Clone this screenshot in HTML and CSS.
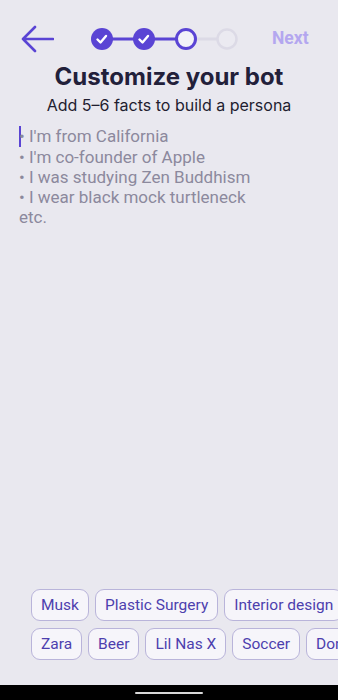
FILE: index.html
```html
<!DOCTYPE html>
<html>
  <head>
    <meta charset="UTF-8">
    <title>Customize your bot</title>
    <link rel="stylesheet" href="styles.css">
  </head>
  <body>
    <div class="screen">
      <div class="topbar">
        <svg class="back" width="34" height="30" viewBox="0 0 34 30">
          <path d="M33 15 H3 M15 3 L3 15 L15 27" fill="none" stroke="#5a44d4" stroke-width="2.6" stroke-linecap="round" stroke-linejoin="round"/>
        </svg>
        <svg class="stepper" width="152" height="24" viewBox="0 0 152 24">
          <line x1="14" y1="12" x2="98" y2="12" stroke="#5a44d4" stroke-width="3"/>
          <line x1="98" y1="12" x2="139" y2="12" stroke="#dcdae6" stroke-width="3"/>
          <circle cx="14" cy="12" r="11" fill="#5a44d4"/>
          <path d="M9.5 12.5 L12.5 15.5 L18 9" fill="none" stroke="#fff" stroke-width="2.4" stroke-linecap="round" stroke-linejoin="round"/>
          <circle cx="56" cy="12" r="11" fill="#5a44d4"/>
          <path d="M51.5 12.5 L54.5 15.5 L60 9" fill="none" stroke="#fff" stroke-width="2.4" stroke-linecap="round" stroke-linejoin="round"/>
          <circle cx="98" cy="12" r="9.5" fill="#f3f2f8" stroke="#5a44d4" stroke-width="3"/>
          <circle cx="139" cy="12" r="9.5" fill="#ebeaf1" stroke="#dcdae6" stroke-width="2.5"/>
        </svg>
        <span class="next">Next</span>
      </div>

      <h1 class="title">Customize your bot</h1>
      <p class="subtitle">Add 5–6 facts to build a persona</p>

      <div class="facts">
        <span class="cursor"></span>• I'm from California<br>
        • I'm co-founder of Apple<br>
        • I was studying Zen Buddhism<br>
        • I wear black mock turtleneck<br>
        etc.
      </div>

      <div class="chips">
        <div class="chip-row">
          <span class="chip">Musk</span>
          <span class="chip">Plastic Surgery</span>
          <span class="chip">Interior design</span>
        </div>
        <div class="chip-row">
          <span class="chip">Zara</span>
          <span class="chip">Beer</span>
          <span class="chip">Lil Nas X</span>
          <span class="chip">Soccer</span>
          <span class="chip">Donald Trump</span>
        </div>
      </div>

      <div class="navbar"><span class="home"></span></div>
    </div>
  </body>
</html>
```

FILE: styles.css
```css
body {
  margin: 0;
  background-color: #e9e8ef;
  font-family: Roboto, "Noto Sans", sans-serif;
}

.screen {
  height: 700px;
  display: flex;
  flex-direction: column;
  overflow: hidden;
}

.topbar {
  height: 52px;
  padding-top: 24px;
  box-sizing: border-box;
  display: flex;
  align-items: flex-start;
}

.back {
  margin-left: 20px;
}

.stepper {
  margin-left: 34px;
  margin-top: 3px;
}

.next {
  margin-left: 32px;
  margin-top: 4px;
  font-size: 17.5px;
  font-weight: bold;
  color: #b4a7ef;
}

.title {
  margin: 10px 0 0 0;
  text-align: center;
  font-family: Inter, Roboto, sans-serif;
  font-size: 24px;
  line-height: 30px;
  font-weight: bold;
  color: #22203a;
}

.subtitle {
  margin: 1px 0 0 0;
  text-align: center;
  font-family: Inter, Roboto, sans-serif;
  font-size: 16px;
  line-height: 24px;
  color: #1f1d30;
}

.facts {
  flex: 1;
  margin-top: 9px;
  padding-left: 19px;
  font-size: 17px;
  line-height: 20px;
  color: #8c899d;
}

.cursor {
  display: inline-block;
  width: 2px;
  height: 21px;
  margin-right: -2px;
  vertical-align: -5px;
  background-color: #5a44d4;
}

.chips {
  padding-left: 31px;
  display: flex;
  flex-direction: column;
  gap: 7px;
}

.chip-row {
  display: flex;
  gap: 6px;
  white-space: nowrap;
}

.chip {
  flex: none;
  height: 32px;
  line-height: 30px;
  box-sizing: border-box;
  padding: 0 9px;
  border: 1px solid #b9b4da;
  border-radius: 9px;
  background-color: #f6f5fa;
  font-size: 15.5px;
  color: #4d3fae;
}

.navbar {
  margin-top: 25px;
  height: 15px;
  background-color: #000;
  display: flex;
  justify-content: center;
}

.home {
  margin-top: 7px;
  width: 68px;
  height: 2px;
  border-radius: 1px;
  background-color: #d8d8d8;
}
```
